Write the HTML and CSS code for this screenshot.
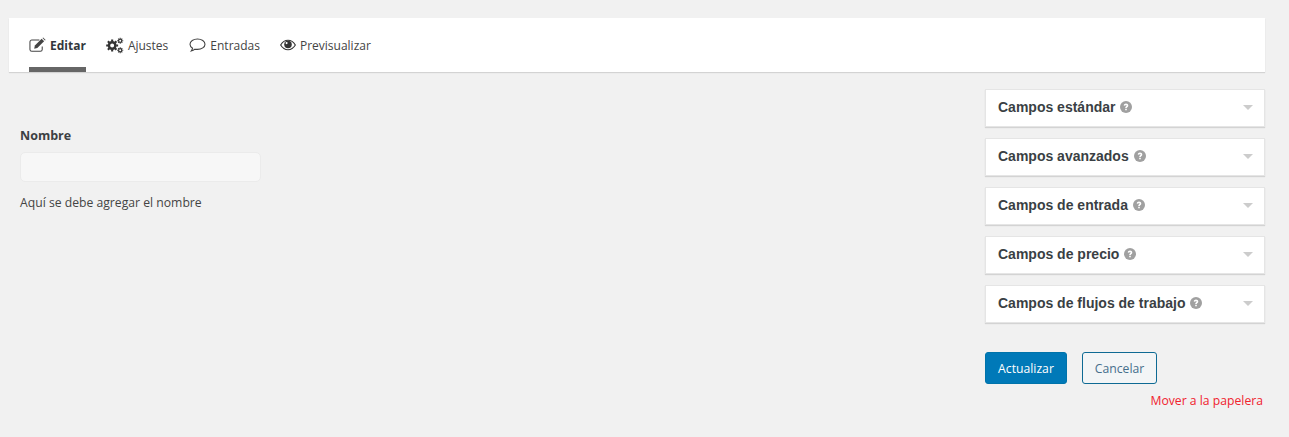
FILE: index.html

```html
<!DOCTYPE html>
<html>
<head>
  <title>Editar formulario</title>
  <link rel="stylesheet" href="styles.css">
</head>
<body>
  <nav class="tabs">
    <a class="tab active">
      <svg class="icon" width="17" height="16" viewBox="0 0 18 16"><path d="M14 9.500v3.200a2 2 0 0 1-2 2H3a2 2 0 0 1-2-2V4.800a2 2 0 0 1 2-2h8" fill="none" stroke="#444" stroke-width="1.100"/><path d="M6.200 8.600 13.400 1.400l2.600 2.600-7.200 7.200-3.300.7z" fill="#444"/><path d="M14.300.6 15 0l2.600 2.600-.7.7z" fill="#444"/></svg>
      Editar
    </a>
    <a class="tab">
      <svg class="icon" width="18" height="17" viewBox="0 0 19 17"><g fill="none" stroke="#333"><circle cx="6.500" cy="8.500" r="3.400" stroke-width="2.600"/><path d="M6.500 2.200v2M6.500 12.800v2M.2 8.500h2M10.800 8.500h2M2 4l1.500 1.500M9.500 11.500 11 13M2 13l1.500-1.500M9.500 5.500 11 4" stroke-width="2.200"/><circle cx="15" cy="3.500" r="1.700" stroke-width="1.300"/><path d="M15 .3v1M15 5.700v1M11.800 3.500h1M17.200 3.500h1M12.800 1.300l.7.7M16.500 5l.7.7M12.800 5.700l.7-.7M16.500 2l.7-.7" stroke-width="1.100"/><circle cx="15" cy="13.500" r="1.700" stroke-width="1.300"/><path d="M15 10.300v1M15 15.700v1M11.800 13.500h1M17.200 13.500h1M12.800 11.300l.7.7M16.500 15l.7.7M12.800 15.700l.7-.7M16.500 12l.7-.7" stroke-width="1.100"/></g></svg>
      <span class="tab-wide">Ajustes</span>
    </a>
    <a class="tab">
      <svg class="icon" width="17" height="16" viewBox="0 0 17 16"><path d="M8.500 2C4.400 2 1 4.300 1 7.200c0 1.600 1 3 2.600 4-.2 1.100-.7 2-1.400 2.800 1.500-.2 2.800-.9 3.800-1.800.8.200 1.600.2 2.500.2 4.100 0 7.500-2.300 7.500-5.200S12.600 2 8.500 2z" fill="none" stroke="#444" stroke-width="1.100"/></svg>
      Entradas
    </a>
    <a class="tab">
      <svg class="icon" width="16" height="12" viewBox="0 0 17 12"><path d="M.7 6C2.500 3 5.200 1 8.500 1s6 2 7.800 5c-1.800 3-4.500 5-7.800 5S2.500 9 .7 6z" fill="none" stroke="#333" stroke-width="1.200"/><circle cx="8.500" cy="5.500" r="4" fill="#333"/><circle cx="7" cy="4" r="1.100" fill="#fff"/></svg>
      Previsualizar
    </a>
  </nav>

  <div class="content">
    <section class="fields">
      <label class="field-label">Nombre</label>
      <input type="text" class="field-input">
      <p class="field-help">Aquí se debe agregar el nombre</p>
    </section>

    <aside class="sidebar">
      <div class="panel">
        <span class="panel-title">Campos estándar</span>
        <svg class="help" width="12" height="12" viewBox="0 0 12 12"><circle cx="6" cy="6" r="6" fill="#a0a0a0"/><path d="M3.700 4.600C3.800 3.200 4.800 2.500 6 2.500c1.300 0 2.300.8 2.300 1.900 0 1.500-1.500 1.500-1.500 2.700H5.200c0-1.800 1.400-1.800 1.400-2.600 0-.4-.3-.6-.6-.6-.5 0-.7.300-.8.800zM5.200 7.700h1.600v1.600H5.200z" fill="#fff"/></svg>
        <span class="caret"></span>
      </div>
      <div class="panel">
        <span class="panel-title">Campos avanzados</span>
        <svg class="help" width="12" height="12" viewBox="0 0 12 12"><circle cx="6" cy="6" r="6" fill="#a0a0a0"/><path d="M3.700 4.600C3.800 3.200 4.800 2.500 6 2.500c1.300 0 2.300.8 2.300 1.900 0 1.500-1.500 1.500-1.500 2.700H5.200c0-1.800 1.400-1.800 1.400-2.600 0-.4-.3-.6-.6-.6-.5 0-.7.300-.8.800zM5.200 7.700h1.600v1.600H5.200z" fill="#fff"/></svg>
        <span class="caret"></span>
      </div>
      <div class="panel">
        <span class="panel-title">Campos de entrada</span>
        <svg class="help" width="12" height="12" viewBox="0 0 12 12"><circle cx="6" cy="6" r="6" fill="#a0a0a0"/><path d="M3.700 4.600C3.800 3.200 4.800 2.500 6 2.500c1.300 0 2.300.8 2.300 1.900 0 1.500-1.500 1.500-1.500 2.700H5.200c0-1.800 1.400-1.800 1.400-2.600 0-.4-.3-.6-.6-.6-.5 0-.7.300-.8.800zM5.200 7.700h1.600v1.600H5.200z" fill="#fff"/></svg>
        <span class="caret"></span>
      </div>
      <div class="panel">
        <span class="panel-title">Campos de precio</span>
        <svg class="help" width="12" height="12" viewBox="0 0 12 12"><circle cx="6" cy="6" r="6" fill="#a0a0a0"/><path d="M3.700 4.600C3.800 3.200 4.800 2.500 6 2.500c1.300 0 2.300.8 2.300 1.900 0 1.500-1.500 1.500-1.500 2.700H5.200c0-1.800 1.400-1.800 1.400-2.600 0-.4-.3-.6-.6-.6-.5 0-.7.300-.8.800zM5.200 7.700h1.600v1.600H5.200z" fill="#fff"/></svg>
        <span class="caret"></span>
      </div>
      <div class="panel">
        <span class="panel-title">Campos de flujos de trabajo</span>
        <svg class="help" width="12" height="12" viewBox="0 0 12 12"><circle cx="6" cy="6" r="6" fill="#a0a0a0"/><path d="M3.700 4.600C3.800 3.200 4.800 2.500 6 2.500c1.300 0 2.300.8 2.300 1.900 0 1.500-1.500 1.500-1.500 2.700H5.200c0-1.800 1.400-1.800 1.400-2.600 0-.4-.3-.6-.6-.6-.5 0-.7.300-.8.800zM5.200 7.700h1.600v1.600H5.200z" fill="#fff"/></svg>
        <span class="caret"></span>
      </div>

      <div class="actions">
        <button class="btn btn-primary">Actualizar</button>
        <button class="btn btn-secondary">Cancelar</button>
      </div>
      <a class="trash">Mover a la papelera</a>
    </aside>
  </div>
</body>
</html>
```

FILE: styles.css

```css
body { margin: 0; padding: 18px 24px 0 9px; background: #f1f1f1; color: #444; font-family: "Open Sans", "Noto Sans", sans-serif; font-size: 12px; }

.tabs { display: flex; gap: 20px; height: 54px; padding-left: 20px; background: #fff; box-shadow: 0 1px 1px rgba(0,0,0,.12); }
.tab { display: flex; align-items: center; gap: 4px; height: 44px; padding-top: 5px; color: #444; }
.tab.active { font-weight: 700; color: #32373c; border-bottom: 5px solid #666; }
.tab-wide { margin-right: 1px; }
.icon { flex: none; }

.content { display: flex; justify-content: space-between; }
.fields { margin: 55px 0 0 11px; width: 241px; }
.field-label { display: block; font-weight: 700; color: #3c4043; font-size: 12.5px; line-height: 17px; }
.field-input { display: block; box-sizing: border-box; width: 241px; height: 30px; margin: 8px 0 0; background: #f7f7f7; border: 1px solid #ebebeb; border-radius: 5px; }
.field-help { margin: 12px 0 0; font-size: 12.2px; line-height: 17px; }

.sidebar { width: 280px; margin-top: 17px; display: flex; flex-direction: column; }
.panel { display: flex; align-items: center; gap: 5px; height: 38px; margin-bottom: 11px; padding: 0 11px 2px 12px; box-sizing: border-box; background: #fff; border: 1px solid #e5e5e5; box-shadow: 0 1px 1px rgba(0,0,0,.12); }
.panel-title { font-family: "Liberation Sans", Arial, sans-serif; font-weight: 700; font-size: 14px; color: #3a3f44; }
.help { flex: none; }
.caret { margin-left: auto; border: 5px solid transparent; border-top-color: #ccc; border-bottom-width: 0; }

.actions { display: flex; gap: 15px; margin-top: 18px; }
.btn { box-sizing: border-box; height: 32px; border-radius: 3px; font-family: inherit; font-size: 12.2px; padding: 0; }
.btn-primary { width: 82px; background: #0079b8; border: 1px solid #0073aa; color: #fff; }
.btn-secondary { width: 75px; background: #f3f5f6; border: 1px solid #0e6a94; color: #466f8c; }
.trash { align-self: flex-end; margin: 8px 2px 0 0; font-size: 12.2px; color: #f0232f; line-height: 17px; }
```
